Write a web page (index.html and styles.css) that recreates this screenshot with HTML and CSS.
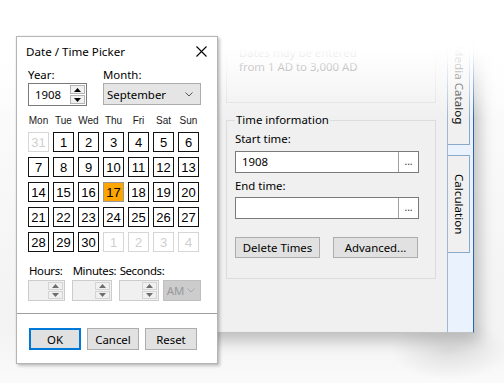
FILE: index.html
```html
<!DOCTYPE html>
<html>
<head>
<meta charset="utf-8">
<link rel="stylesheet" href="styles.css">
</head>
<body class="desktop">
  <div class="bgwin">
    <div class="bgmain">
      <div class="range-box">
        <div class="range-line">Dates may be entered</div>
        <div class="range-line">from 1 AD to 3,000 AD</div>
      </div>
      <fieldset class="group">
        <legend class="group-title">Time information</legend>
        <div class="lbl lbl-start">Start time:</div>
        <div class="tbox"><span class="tbox-val">1908</span><span class="dots">...</span></div>
        <div class="lbl lbl-end">End time:</div>
        <div class="tbox"><span class="tbox-val"></span><span class="dots">...</span></div>
        <div class="grp-btns">
          <span class="wbtn wbtn-wide">Delete Times</span>
          <span class="wbtn wbtn-wide">Advanced...</span>
        </div>
      </fieldset>
    </div>
    <div class="tabstrip">
      <div class="vtab vtab-1"><span class="vtab-text">Media Catalog</span></div>
      <div class="vtab vtab-2"><span class="vtab-text">Calculation</span></div>
    </div>
  </div>
  <div class="fade"></div>

  <div class="dialog">
    <div class="titlebar">
      <span class="title">Date / Time Picker</span>
      <svg class="close" width="11" height="11" viewBox="0 0 11 11"><path d="M0.5 0.5 L10.5 10.5 M10.5 0.5 L0.5 10.5" stroke="#000" stroke-width="1.1" fill="none"/></svg>
    </div>
    <div class="dlg-body">
      <div class="ym-row">
        <div class="field field-year">
          <div class="flabel">Year:</div>
          <div class="spin spin-year">
            <span class="spin-val">1908</span>
            <div class="sbtns">
              <span class="sbtn"><svg width="7" height="4" viewBox="0 0 7 4"><path d="M0 4 L3.5 0 L7 4Z" fill="#000"/></svg></span>
              <span class="sbtn"><svg width="7" height="4" viewBox="0 0 7 4"><path d="M0 0 L3.5 4 L7 0Z" fill="#000"/></svg></span>
            </div>
          </div>
        </div>
        <div class="field field-month">
          <div class="flabel">Month:</div>
          <div class="combo">
            <span class="combo-val">September</span>
            <svg class="chev" width="8" height="5" viewBox="0 0 8 5"><path d="M0.5 0.5 L4 4 L7.5 0.5" stroke="#555" stroke-width="1" fill="none"/></svg>
          </div>
        </div>
      </div>

      <div class="cal-head">
        <span>Mon</span><span>Tue</span><span>Wed</span><span>Thu</span><span>Fri</span><span>Sat</span><span>Sun</span>
      </div>
      <div class="cal-grid">
        <span class="day off">31</span><span class="day">1</span><span class="day">2</span><span class="day">3</span><span class="day">4</span><span class="day">5</span><span class="day">6</span>
        <span class="day">7</span><span class="day">8</span><span class="day">9</span><span class="day">10</span><span class="day">11</span><span class="day">12</span><span class="day">13</span>
        <span class="day">14</span><span class="day">15</span><span class="day">16</span><span class="day sel">17</span><span class="day">18</span><span class="day">19</span><span class="day">20</span>
        <span class="day">21</span><span class="day">22</span><span class="day">23</span><span class="day">24</span><span class="day">25</span><span class="day">26</span><span class="day">27</span>
        <span class="day">28</span><span class="day">29</span><span class="day">30</span><span class="day off">1</span><span class="day off">2</span><span class="day off">3</span><span class="day off">4</span>
      </div>

      <div class="time-row">
        <div class="tfield tf-hours">
          <div class="flabel tlabel">Hours:</div>
          <div class="spin spin-dis">
            <span class="spin-val"></span>
            <div class="sbtns">
              <span class="sbtn"><svg width="7" height="4" viewBox="0 0 7 4"><path d="M0 4 L3.5 0 L7 4Z" fill="#6d6d6d"/></svg></span>
              <span class="sbtn"><svg width="7" height="4" viewBox="0 0 7 4"><path d="M0 0 L3.5 4 L7 0Z" fill="#6d6d6d"/></svg></span>
            </div>
          </div>
        </div>
        <div class="tfield tf-min">
          <div class="flabel tlabel">Minutes:</div>
          <div class="spin spin-dis">
            <span class="spin-val"></span>
            <div class="sbtns">
              <span class="sbtn"><svg width="7" height="4" viewBox="0 0 7 4"><path d="M0 4 L3.5 0 L7 4Z" fill="#6d6d6d"/></svg></span>
              <span class="sbtn"><svg width="7" height="4" viewBox="0 0 7 4"><path d="M0 0 L3.5 4 L7 0Z" fill="#6d6d6d"/></svg></span>
            </div>
          </div>
        </div>
        <div class="tfield tf-sec">
          <div class="flabel tlabel">Seconds:</div>
          <div class="spin spin-dis">
            <span class="spin-val"></span>
            <div class="sbtns">
              <span class="sbtn"><svg width="7" height="4" viewBox="0 0 7 4"><path d="M0 4 L3.5 0 L7 4Z" fill="#6d6d6d"/></svg></span>
              <span class="sbtn"><svg width="7" height="4" viewBox="0 0 7 4"><path d="M0 0 L3.5 4 L7 0Z" fill="#6d6d6d"/></svg></span>
            </div>
          </div>
        </div>
        <div class="ampm">
          <span class="ampm-val">AM</span>
          <svg class="chev" width="8" height="5" viewBox="0 0 8 5"><path d="M0.5 0.5 L4 4 L7.5 0.5" stroke="#a8a8a8" stroke-width="1" fill="none"/></svg>
        </div>
      </div>
    </div>
    <div class="sep"></div>
    <div class="btn-row">
      <span class="wbtn dbtn btn-ok">OK</span>
      <span class="wbtn dbtn">Cancel</span>
      <span class="wbtn dbtn">Reset</span>
    </div>
  </div>
</body>
</html>
```

FILE: styles.css
```css
* { box-sizing: border-box; }

html, body { margin: 0; padding: 0; }

.desktop {
  position: relative;
  width: 504px;
  height: 383px;
  overflow: hidden;
  font-family: "Noto Sans", "Open Sans", sans-serif;
  font-size: 11.4px;
  color: #000;
  background:
    radial-gradient(ellipse 60px 30px at 450px 350px, rgba(0,0,0,0.10), rgba(0,0,0,0) 100%),
    linear-gradient(180deg, #ffffff 0%, #f6f6f6 60%, #f3f3f3 85%, #fafafa 100%);
}

/* ---------- background window ---------- */
.bgwin {
  position: absolute;
  left: 200px;
  top: 37px;
  width: 274px;
  height: 296px;
  display: flex;
  box-shadow: 6px 8px 14px rgba(0,0,0,0.22);
}

.bgmain {
  flex: 1;
  background: #f0f0f0;
  border-top: 1px solid #d8d8d8;
  border-bottom: 1px solid #c2c2c2;
  padding: 4px 11px 0 26px;
}

.range-box {
  border: 1px solid #dcdcdc;
  padding: 3px 0 28px 12px;
  line-height: 14px;
  color: #000;
}

.range-line { white-space: nowrap; }

.group {
  margin: 9px 0 0 0;
  padding: 0 8px 20px 8px;
  border: 1px solid #dcdcdc;
  min-width: 0;
}

.group-title {
  padding: 0 1px;
  line-height: 16px;
  color: #000;
}

.lbl { line-height: 16px; }
.lbl-start { margin-top: 3px; }
.lbl-end { margin-top: 5px; }

.tbox {
  margin-top: 4px;
  height: 22px;
  width: 184px;
  background: #fff;
  border: 1px solid #7a7a7a;
  display: flex;
  align-items: stretch;
}
.lbl-end + .tbox { margin-top: 3px; }

.tbox-val {
  flex: 1;
  padding-left: 6px;
  line-height: 20px;
}

.dots {
  width: 20px;
  border-left: 1px solid #a0a0a0;
  text-align: center;
  line-height: 18px;
  font-size: 10px;
  color: #333;
}

.grp-btns {
  margin-top: 18px;
  display: flex;
  gap: 13px;
}

.wbtn {
  display: flex;
  align-items: center;
  justify-content: center;
  background: #e1e1e1;
  border: 1px solid #adadad;
  height: 21px;
  white-space: nowrap;
}
.wbtn-wide { width: 85px; }

.tabstrip {
  width: 27px;
  background: #eaf3fd;
  border-left: 1px solid #9fb6d6;
  border-right: 1px solid #2a62b0;
  border-bottom: 1px solid #c2c2c2;
  display: flex;
  flex-direction: column;
  gap: 10px;
}

.vtab {
  width: 22px;
  background: #f0f0f0;
  border: 1px solid #8ca7cc;
  border-left: none;
  display: flex;
  justify-content: center;
}
.vtab-1 { height: 108px; border-top: none; align-items: flex-end; padding-bottom: 20px; }
.vtab-2 { height: 98px; align-items: center; }

.vtab-text {
  writing-mode: vertical-rl;
  line-height: 16px;
  white-space: nowrap;
  font-size: 11.6px;
}

.fade {
  position: absolute;
  left: 0;
  top: 0;
  width: 504px;
  height: 118px;
  background: linear-gradient(180deg,
    rgba(255,255,255,1) 0px,
    rgba(255,255,255,0.99) 50px,
    rgba(255,255,255,0.86) 62px,
    rgba(255,255,255,0.78) 68px,
    rgba(255,255,255,0.45) 90px,
    rgba(255,255,255,0) 118px);
}

/* ---------- dialog ---------- */
.dialog {
  position: absolute;
  left: 16px;
  top: 36px;
  width: 202px;
  background: #fff;
  border: 1px solid #b5b5b5;
  box-shadow: 2px 2px 3px rgba(0,0,0,0.22), 0 0 2px rgba(0,0,0,0.1);
  padding-bottom: 13px;
}

.titlebar {
  height: 28px;
  display: flex;
  align-items: center;
  justify-content: space-between;
  padding: 0 10px 0 9px;
}

.title { font-size: 11.6px; }

.close { display: block; }

.dlg-body {
  padding: 2px 16px 12px 11px;
}

.ym-row {
  display: flex;
  gap: 16px;
}

.flabel {
  line-height: 16px;
  white-space: nowrap;
}

.tlabel {
  letter-spacing: -0.35px;
  padding-left: 1px;
}

.field-year { width: 59px; }
.field-month { width: 98px; }

.spin {
  display: flex;
  border: 1px solid #7a7a7a;
  background: #fff;
}
.spin-year { height: 23px; }

.spin-val {
  flex: 1;
  padding-left: 6px;
  line-height: 21px;
}

.sbtns {
  width: 16px;
  display: flex;
  flex-direction: column;
  gap: 1px;
  padding: 1px 1px 1px 0;
}

.sbtn {
  flex: 1;
  display: flex;
  align-items: center;
  justify-content: center;
  background: #f0f0f0;
  border: 1px solid #b4b4b4;
}
.sbtn svg { display: block; }

.combo {
  height: 22px;
  background: #e5e5e5;
  border: 1px solid #acacac;
  display: flex;
  align-items: center;
  justify-content: space-between;
  padding: 0 7px 0 3px;
}

.chev { display: block; }

/* calendar */
.cal-head,
.cal-grid {
  display: grid;
  grid-template-columns: repeat(7, 21px);
  column-gap: 4px;
}

.cal-head {
  margin-top: 8px;
  font-family: "Liberation Sans", Arial, sans-serif;
  font-size: 10px;
  line-height: 14px;
  color: #1a1a1a;
}
.cal-head span { text-align: center; white-space: nowrap; }

.cal-grid {
  margin-top: 4px;
  row-gap: 5px;
  font-family: "Liberation Sans", Arial, sans-serif;
  font-size: 13px;
}

.day {
  height: 20px;
  border: 1px solid #111;
  display: flex;
  align-items: center;
  justify-content: center;
  color: #000;
}
.day.off { color: #cfcfcf; border-color: #d6d6d6; }
.day.sel { background: #ffa500; border-color: #9a9a9a; }

/* time row */
.time-row {
  margin-top: 11px;
  display: flex;
  align-items: flex-end;
}

.tfield { width: 40px; }
.tf-hours { margin-left: 0; }
.tf-min { margin-left: 7px; }
.tf-sec { margin-left: 7px; }

.spin-dis {
  margin-top: 1px;
  height: 21px;
  background: #f0f0f0;
  border-color: #cccccc;
}
.spin-dis .sbtn { border-color: #d4d4d4; background: #f0f0f0; }

.ampm {
  margin-left: 4px;
  width: 41px;
  height: 21px;
  background: #cccccc;
  border: 1px solid #bfbfbf;
  display: flex;
  align-items: center;
  justify-content: space-between;
  padding: 0 5px 0 3px;
  color: #9a9a9a;
}

.sep {
  height: 1px;
  background: #a0a0a0;
}

.btn-row {
  margin-top: 14px;
  padding-left: 12px;
  display: flex;
  gap: 6px;
}

.dbtn {
  width: 52px;
  height: 22px;
}

.btn-ok {
  border: 2px solid #0078d7;
}
```
